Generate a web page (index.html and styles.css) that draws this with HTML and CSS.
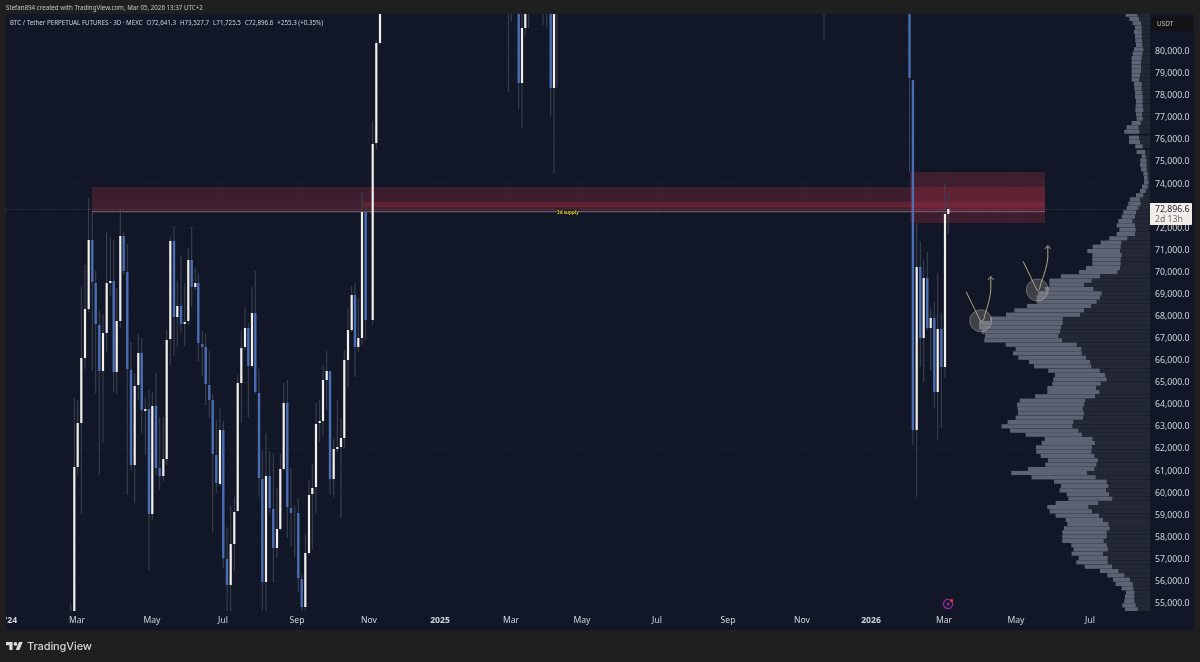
FILE: index.html
```html
<!DOCTYPE html>
<html lang="en">
<head>
<meta charset="utf-8">
<title>BTC / Tether PERPETUAL FUTURES chart</title>
<link rel="stylesheet" href="styles.css">
</head>
<body>
<header class="topbar">Stefan894 created with TradingView.com, Mar 05, 2026 13:37 UTC+2</header>
<main class="chart">
  <section class="pane">
    <svg id="plot" class="plot" viewBox="6 14 1144 597" preserveAspectRatio="none" xmlns="http://www.w3.org/2000/svg"></svg>
    <div class="legend">BTC / Tether PERPETUAL FUTURES · 3D · MEXC<span class="ohlc">O72,641.3</span><span class="ohlc">H73,527.7</span><span class="ohlc">L71,725.5</span><span class="ohlc">C72,896.6</span><span class="ohlc">+255.3 (+0.35%)</span></div>
  </section>
  <aside class="price-axis">
    <div class="currency">USDT</div>
    <ul class="prices">
      <li>80,000.0</li><li>79,000.0</li><li>78,000.0</li><li>77,000.0</li><li>76,000.0</li>
      <li>75,000.0</li><li>74,000.0</li><li class="covered"></li><li>72,000.0</li><li>71,000.0</li>
      <li>70,000.0</li><li>69,000.0</li><li>68,000.0</li><li>67,000.0</li><li>66,000.0</li>
      <li>65,000.0</li><li>64,000.0</li><li>63,000.0</li><li>62,000.0</li><li>61,000.0</li>
      <li>60,000.0</li><li>59,000.0</li><li>58,000.0</li><li>57,000.0</li><li>56,000.0</li>
      <li>55,000.0</li>
    </ul>
    <div class="last-price"><b>72,896.6</b><span>2d 13h</span></div>
  </aside>
  <nav id="times" class="time-axis"></nav>
  <div class="event" aria-hidden="true">
    <svg viewBox="0 0 14 14" width="14" height="14" xmlns="http://www.w3.org/2000/svg">
      <circle cx="7" cy="7" r="4.6" fill="#1b1730" stroke="#8e2f9e" stroke-width="1.3"/>
      <path d="M7.8 4.2 5.6 7.4h1.5L6.3 9.9 8.6 6.6H7.1z" fill="#b13cc4"/>
      <circle cx="10.6" cy="3.6" r="1.5" fill="#f0334b"/>
    </svg>
  </div>
</main>
<footer class="footer">
  <svg class="logo" viewBox="0 4 36 18" xmlns="http://www.w3.org/2000/svg"><path d="M14 22H7V11H0V4h14v18zM28 22h-8l7.5-18h8L28 22z"/><circle cx="20" cy="8" r="4"/></svg>
  <span class="brand">TradingView</span>
</footer>
<script src="chart.js"></script>
</body>
</html>
```
FILE: styles.css
```css
* { box-sizing: border-box; }
html, body { height: 100%; }
body {
  margin: 0;
  height: 662px;
  overflow: hidden;
  display: flex;
  flex-direction: column;
  background: #1f1f1f;
  color: #d1d4dc;
  font-family: "Noto Sans", "Liberation Sans", sans-serif;
  filter: blur(0.3px);
}
.topbar {
  height: 14px;
  flex: none;
  padding: 3px 0 0 6px;
  font-size: 6.2px;
  line-height: 10px;
  color: #c4c4c4;
  white-space: nowrap;
}
.chart {
  flex: none;
  height: 616px;
  margin: 0 6px;
  position: relative;
  display: grid;
  grid-template-columns: 1144px 44px;
  grid-template-rows: 597px 19px;
  background: #111726;
  overflow: hidden;
}
.pane { position: relative; overflow: hidden; }
.plot { display: block; width: 100%; height: 100%; }
.legend {
  position: absolute;
  left: 4px;
  top: 4px;
  font-size: 6.2px;
  line-height: 9px;
  color: #d1d4dc;
  white-space: nowrap;
}
.ohlc { margin-left: 4px; }
.price-axis { position: relative; }
.currency {
  position: absolute;
  left: 2px;
  top: 3px;
  width: 41px;
  height: 14px;
  padding-left: 5px;
  border-radius: 3px;
  background: #131313;
  color: #c9c9c9;
  font-size: 6.4px;
  line-height: 14px;
}
.prices {
  list-style: none;
  margin: 0;
  padding: 26px 0 0 5px;
  display: flex;
  flex-direction: column;
}
.prices li {
  height: 22.08px;
  display: flex;
  align-items: center;
  font-size: 8.7px;
  line-height: 6px;
  color: #d1d4dc;
  white-space: nowrap;
}
.last-price {
  position: absolute;
  left: 0;
  top: 189px;
  width: 42px;
  height: 21.5px;
  padding: 1px 0 0 5px;
  display: flex;
  flex-direction: column;
  border-radius: 0 1px 1px 0;
  background: #f1eeea;
  font-size: 8.7px;
  line-height: 10px;
  color: #23262e;
  white-space: nowrap;
}
.last-price b { font-weight: 400; }
.last-price span { color: #6a6d75; }
.time-axis {
  grid-column: 1 / 3;
  position: relative;
  overflow: hidden;
}
.tick {
  position: absolute;
  top: 3px;
  font-size: 8.6px;
  line-height: 12px;
  color: #d1d4dc;
  transform: translateX(-50%);
  white-space: nowrap;
}
.tick.major { font-weight: 700; }
.event {
  position: absolute;
  left: 935px;
  top: 583px;
  width: 14px;
  height: 14px;
}
.event svg { display: block; }
.footer {
  flex: 1;
  display: flex;
  align-items: center;
  gap: 4px;
  padding: 0 0 0 6px;
}
.logo { width: 17px; height: 8.5px; fill: #d9d9d9; flex: none; }
.brand {
  font-family: "Inter", "Liberation Sans", sans-serif;
  font-size: 11px;
  font-weight: 500;
  color: #d4d4d4;
  letter-spacing: -0.1px;
}
.candle-white { stroke: #f2efeb; stroke-width: 2.2; fill: none; }
.candle-blue { stroke: #4a6db3; stroke-width: 2.4; fill: none; }
.wick { stroke: #3f4452; stroke-width: 1; fill: none; }
.grid { stroke: rgba(255, 255, 255, 0.028); stroke-width: 1; fill: none; }
.zone { fill: rgba(170, 45, 65, 0.3); }
.zone-line { stroke: #6e5468; stroke-width: 1.3; }
.last-line { stroke: rgba(205, 205, 205, 0.35); stroke-width: 0.7; stroke-dasharray: 1 1.6; }
.zone-text { fill: #d9c425; font: 700 4.6px "Noto Sans", sans-serif; text-anchor: middle; }
.zone-gap { fill: #1a1a2a; }
.vp-dark { fill: #242835; }
.vp-grey { fill: #5d6372; }
.mark { fill: rgba(200, 190, 170, 0.25); stroke: rgba(215, 205, 185, 0.35); stroke-width: 1; }
.arrow { fill: none; stroke: #b5a588; stroke-width: 1; stroke-linecap: round; stroke-linejoin: round; }
```
FILE: chart.js
```js
const NS = "http://www.w3.org/2000/svg";
const plot = document.getElementById("plot");

function add(tag, cls, attrs) {
  const el = document.createElementNS(NS, tag);
  if (cls) el.setAttribute("class", cls);
  for (const k in attrs) el.setAttribute(k, attrs[k]);
  plot.appendChild(el);
  return el;
}

/* time axis: [label, x, major] */
const ticks = [
  ["'24", 11, 1], ["Mar", 77], ["May", 152], ["Jul", 223], ["Sep", 297], ["Nov", 369],
  ["2025", 440, 1], ["Mar", 511], ["May", 582], ["Jul", 657], ["Sep", 728], ["Nov", 802],
  ["2026", 871, 1], ["Mar", 944], ["May", 1016], ["Jul", 1090]
];
const timeAxis = document.getElementById("times");
let gridD = "";
for (const [label, x, major] of ticks) {
  const t = document.createElement("span");
  t.className = major ? "tick major" : "tick";
  t.textContent = label;
  t.style.left = (x - 6) + "px";
  timeAxis.appendChild(t);
  gridD += `M${major && x < 20 ? 5 : x} 14V611`;
}
for (let i = -2; i < 26; i++) gridD += `M6 ${51 + i * 22.08}H1150`;
add("path", "grid", { d: gridD });

/* supply zones */
add("rect", "zone", { x: 92, y: 187, width: 953, height: 25 });
add("rect", "zone", { x: 910, y: 172, width: 135, height: 51 });
add("rect", "zone", { x: 362, y: 202, width: 683, height: 5.5 });
add("path", "last-line", { d: "M6 209.3H1150" });
add("path", "zone-line", { d: "M92 211.6H1045" });
add("rect", "zone-gap", { x: 557, y: 209.5, width: 22, height: 4.5 });
add("text", "zone-text", { x: 568, y: 213.6 }).textContent = "3d supply";

/* volume profile rows, as [row y, grey start, grey end] measured in three bands */
const bandLow = [
  [748,375,413],[736,367,407],[723,373,403],[710,375,403],[698,378,403],[685,365,400],[672,347,398],[659,339,390],[646,322,373],[633,300,355],
  [620,254,336],[607,229,323],[594,236,323],[581,215,309],[568,221,324],[556,214,320],[543,187,311],[530,187,320],[517,187,320],[505,192,329],
  [492,202,325],[480,197,309],[467,167,297],[454,149,276],[441,142,265],[429,167,294],[416,205,337],[403,200,327],[391,179,318],[378,183,325],
  [365,162,320],[352,95,287],[339,34,261],[327,84,283],[314,136,289],[301,144,294],[288,122,283],[275,109,274],[262,108,276],[249,125,285],
  [237,134,277],[224,77,246],[212,30,235],[199,5,217],[186,23,220],[173,47,249],[160,54,252],[147,53,248],[134,51,252],[122,59,255],
  [109,105,285],[96,142,298],[84,142,288],[71,157,302],[58,160,320],[45,165,315],[32,145,299],[19,102,274],[6,87,270]
];
const bandMid = [
  [623,415,618],[610,399,605],[597,407,604],[584,377,590],[571,313,546],[558,315,535],[545,305,540],[532,297,543],[519,297,548],[506,330,548],
  [494,378,600],[481,403,612],[468,441,633],[455,470,650],[442,470,660],[430,475,665],[417,495,640],[404,508,612],[392,508,635],[379,543,660],
  [366,597,712],[354,618,720],[341,637,722],[328,637,722],[315,637,725],[303,622,720],[290,638,722],[278,662,724],[265,688,742],[252,710,765],
  [239,718,767],[226,710,765],[213,715,757],[200,725,765],[187,730,768],[174,740,775],[161,745,782],[148,750,780],[136,768,790],[123,780,797],
  [110,786,803],[97,792,805],[84,792,803],[71,790,803],[58,783,800],[45,780,800],[32,781,800],[19,785,797],[6,770,795]
];
const bandTop = [
  [439,226,248],[426,207,240],[413,207,237],[395,193,238],[382,200,235],[369,215,242],[356,230,248],[343,228,246],[330,226,250],[317,227,248],
  [304,228,248],[291,225,248],[278,225,247],[265,223,245],[252,222,245],[239,215,238],[226,215,240],[213,215,243],[200,215,243],[187,215,243],
  [174,215,245],[161,218,247],[148,222,250],[135,228,247],[122,226,246],[109,225,245],[96,222,245],[83,225,245],[70,218,243],[57,208,237],[44,197,232]
];
const rows = [
  ...bandLow.map(([z, a, b]) => [360 + z / 3, 1000 + a / 3, 1000 + b / 3]),
  ...bandMid.map(([z, a, b]) => [150 + z / 3, 880 + a / 3, 880 + b / 3]),
  ...bandTop.map(([z, a, b]) => [z / 3, 1060 + a / 3, 1060 + b / 3])
];
for (const [y, a] of rows) add("rect", "vp-dark", { x: a, y: y - 2.05, width: 1150 - a, height: 4.1 });
for (const [y, a, b] of rows) add("rect", "vp-grey", { x: a, y: y - 2.05, width: b - a, height: 4.1 });

/* candles: [x, bodyTop, bodyBottom, wickTop, wickBottom, w|b|n] */
const candles = [
  [70.7,605,605,604,611,"n"],
  [74.3,467,611,398,611,"w"],[77.7,423,467,400,475,"w"],[81.3,358,423,287,514,"w"],[85,309,358,265,369,"w"],[88.7,240,309,198,312,"w"],
  [92.3,240,282,212,371,"b"],[95.7,283,324,271,393,"b"],[99.3,325,371,311,475,"b"],[103,333,371,315,443,"w"],[106.7,283,333,232,352,"w"],
  [110.3,281,283,237,296,"w"],[113.7,281,372,240,392,"b"],[116.7,321,372,288,394,"w"],[120.3,236,321,209,328,"w"],[123.7,236,271,232,275,"b"],
  [127.3,272,369,244,495,"b"],[131,370,465,342,470,"b"],[134.7,386,465,373,503,"w"],[138.3,353,385,334,400,"w"],[141.7,353,410,338,433,"b"],
  [145.3,409,411,397,455,"w"],[149,409,514,390,570,"b"],[152.3,406,514,392,520,"w"],[156,406,468,373,475,"b"],[159.7,468,476,417,490,"b"],
  [163.3,459,476,417,481,"w"],[166.7,340,459,330,465,"w"],[170.3,241,339,236,365,"w"],[174,241,317,226,356,"b"],[177.3,306,317,281,347,"w"],
  [181,306,324,256,333,"b"],[184.7,322,324,283,346,"w"],[188.3,260,321,248,325,"w"],[191.7,260,287,227,307,"b"],[195.3,283,287,268,290,"w"],
  [198.3,283,343,273,362,"b"],[202.3,344,347,331,376,"b"],[205.7,347,384,333,405,"b"],[209.3,385,400,351,418,"b"],[212.7,400,454,394,532,"b"],
  [216.3,455,483,420,493,"b"],[220,430,484,408,486,"w"],[223.3,430,558,421,568,"b"],[227,559,585,527,611,"b"],[230.7,544,585,506,611,"w"],
  [234.3,512,544,497,571,"w"],[237.7,383,511,375,512,"w"],[241.3,348,383,331,423,"w"],[245,328,347,307,350,"w"],[248.3,328,366,323,417,"b"],
  [252,313,366,287,368,"w"],[255.3,313,392,271,394,"b"],[259,393,478,369,497,"b"],[262.3,479,582,450,611,"b"],[266,476,582,433,611,"w"],
  [269.7,476,508,451,513,"b"],[273.3,509,548,453,582,"b"],[277,529,548,488,558,"w"],[280.3,469,529,454,531,"w"],[283.7,403,469,383,470,"w"],
  [287.3,403,507,380,538,"b"],[291,508,513,468,546,"b"],[294.7,520,520,506,557,"n"],[298.3,513,578,498,592,"b"],[301.7,579,607,575,611,"b"],
  [305.3,553,607,535,611,"w"],[309,495,553,480,555,"w"],[312.3,488,494,464,549,"w"],[316,424,487,403,513,"w"],[319.7,421,423,400,442,"w"],
  [323,380,421,365,436,"w"],[326.7,371,380,351,410,"w"],[330,371,479,371,495,"b"],[333.7,449,479,439,497,"w"],[337.3,447,449,400,452,"w"],
  [341,438,447,418,518,"w"],[344.3,360,438,350,448,"w"],[348,330,360,308,387,"w"],[351.7,295,330,286,332,"w"],[355,295,347,283,377,"b"],
  [358.3,338,347,298,352,"w"],[362,212,338,192,345,"w"],[365.7,212,320,207,340,"b"],[372.7,144,320,121,325,"w"],[376.3,43,143,40,149,"w"],[380,14,43,14,45,"w"],
  [508.3,20,20,14,92,"n"],[511.3,16,16,14,21,"n"],[518.7,14,83,14,109,"b"],[522,28,83,14,128,"w"],[525.3,14,28,14,35,"w"],[528.7,20,20,14,28,"n"],
  [543,16,16,14,25,"n"],[546.7,16,16,14,27,"n"],[550.7,14,88,14,116,"b"],[554,14,88,14,174,"w"],[557,20,20,14,87,"n"],[824,20,20,14,39,"n"],
  [909.5,14,78,14,172,"b"],[912.9,80,430,80,445,"b"],[916.7,267,430,223,497,"w"],[920.3,267,338,241,367,"b"],[923.7,278,338,260,382,"w"],
  [927.3,278,328,252,330,"b"],[930.7,318,328,307,370,"w"],[934.3,318,392,302,408,"b"],[937.7,329,392,273,440,"w"],[941.3,329,367,313,428,"b"],
  [945,214,367,184,378,"w"],[948.3,209,214,195,234,"w"]
];
let wicks = "", white = "", blue = "";
for (const [x, t, b, wt, wb, c] of candles) {
  wicks += `M${x} ${wt}V${wb}`;
  if (c === "w") white += `M${x} ${t}V${b}`;
  if (c === "b") blue += `M${x} ${t}V${b}`;
}
add("path", "wick", { d: wicks });
add("path", "candle-blue", { d: blue });
add("path", "candle-white", { d: white });

/* hand-drawn marks */
add("circle", "mark", { cx: 980.7, cy: 320.7, r: 11 });
add("circle", "mark", { cx: 1037.3, cy: 290, r: 11 });
add("path", "arrow", { d: "M966.3 292 Q976 312 980.5 321 Q984 322 984.5 316 Q990 300 990.8 290 L990.8 277.5 M988.3 279.5 L990.8 276.5 L993.3 279.5" });
add("path", "arrow", { d: "M1023.3 261.7 Q1032 280 1037 290 Q1040 291 1040.3 285 Q1047 268 1047.8 258 L1047.8 246.5 M1045.3 248.5 L1047.8 245.5 L1050.3 248.5" });
```
